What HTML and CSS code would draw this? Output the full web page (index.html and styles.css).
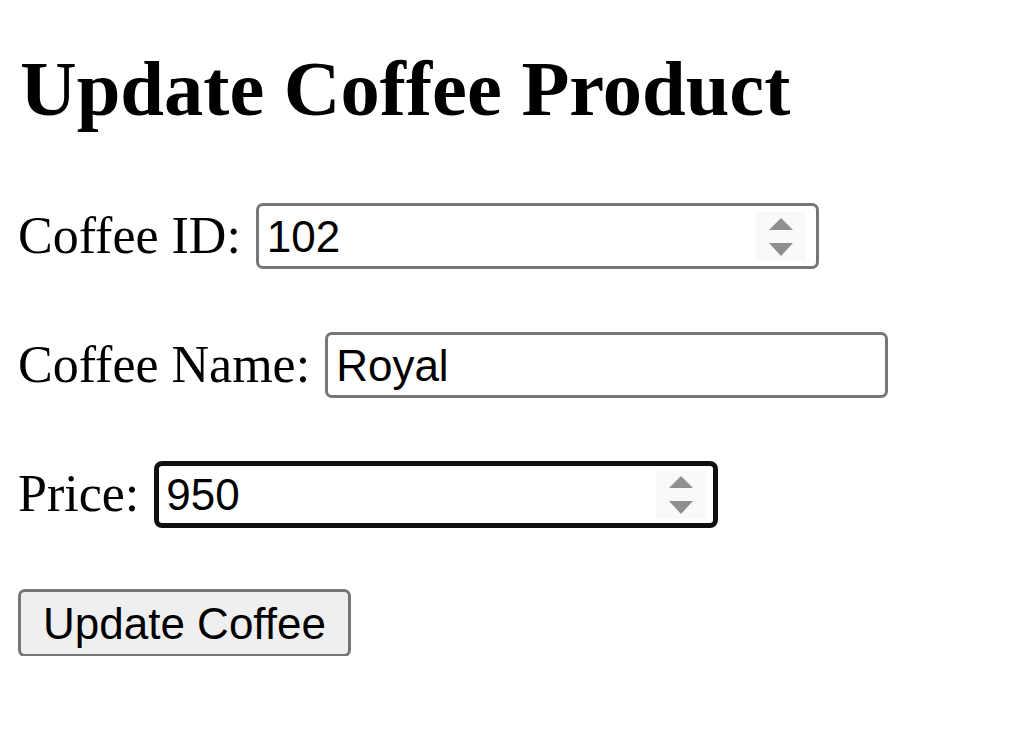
FILE: index.html
```html
<!DOCTYPE html>
<html lang="en">
<head>
<meta charset="utf-8">
<title>Update Coffee Product</title>
<link rel="stylesheet" href="styles.css">
</head>
<body>
<main class="page">
  <h2 class="title">Update Coffee Product</h2>
  <form class="form">
    <div class="row">
      <label class="label" for="cid">Coffee ID:</label>
      <div class="field">
        <input class="input" id="cid" type="text" value="102">
        <span class="spin"><svg width="50" height="49" viewBox="0 0 50 49"><polygon points="13,18 25,6 37,18" fill="#8f8f8f"/><polygon points="13,31 37,31 25,44" fill="#8f8f8f"/></svg></span>
      </div>
    </div>
    <div class="row">
      <label class="label" for="cname">Coffee Name:</label>
      <div class="field">
        <input class="input" id="cname" type="text" value="Royal">
      </div>
    </div>
    <div class="row">
      <label class="label" for="price">Price:</label>
      <div class="field field-focus">
        <input class="input" id="price" type="text" value="950">
        <span class="spin"><svg width="50" height="49" viewBox="0 0 50 49"><polygon points="13,18 25,6 37,18" fill="#8f8f8f"/><polygon points="13,31 37,31 25,44" fill="#8f8f8f"/></svg></span>
      </div>
    </div>
    <div class="row">
      <button class="btn" type="button">Update Coffee</button>
    </div>
  </form>
</main>
</body>
</html>
```

FILE: styles.css
```css
html, body {
  margin: 0;
  padding: 0;
  background: #ffffff;
}

.page {
  padding: 43px 0 0 18px;
  font-family: "Liberation Serif", "Times New Roman", serif;
  color: #000;
}

.title {
  margin: 0 0 0 2px;
  font-size: 78.5px;
  line-height: 92px;
  font-weight: bold;
}

.form {
  display: flex;
  flex-direction: column;
  gap: 63px;
  margin-top: 68px;
}

.row {
  display: flex;
  align-items: center;
  gap: 15px;
  height: 66px;
}

.label {
  font-size: 52px;
  line-height: 60px;
}

.field {
  box-sizing: border-box;
  display: flex;
  align-items: center;
  width: 563px;
  height: 66px;
  border: 3px solid #767676;
  border-radius: 7px;
  padding: 0 10px 0 8px;
  background: #fff;
}

.field-focus {
  width: 564px;
  height: 67px;
  border: 5px solid #101010;
  border-radius: 8px;
  padding: 0 7px 0 7px;
}

.input {
  flex: 1;
  min-width: 0;
  border: none;
  outline: none;
  background: transparent;
  padding: 0;
  margin: 0;
  font-family: "Liberation Sans", Arial, sans-serif;
  font-size: 44px;
  line-height: 51px;
  color: #000;
}

.spin {
  display: block;
  width: 50px;
  height: 49px;
  background: #f9f9f9;
}

.spin svg {
  display: block;
}

.btn {
  box-sizing: border-box;
  height: 68px;
  padding: 0 22px;
  border: 3px solid #767676;
  border-radius: 7px;
  background: #efefef;
  font-family: "Liberation Sans", Arial, sans-serif;
  font-size: 44px;
  line-height: 51px;
  color: #000;
}
```
